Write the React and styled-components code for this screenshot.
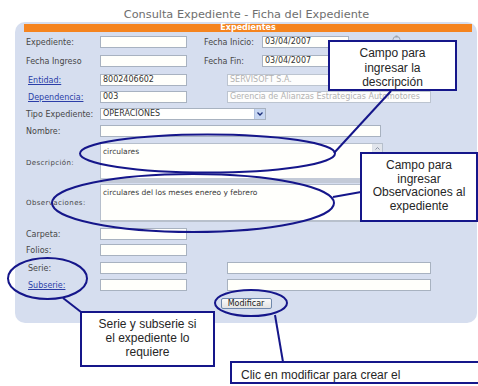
import React from 'react';
import styled, { createGlobalStyle } from 'styled-components';

const Global = createGlobalStyle`
  html, body { margin: 0; padding: 0; background: #fff; }
  body { font-family: "DejaVu Sans", Verdana, sans-serif; }
  #root { width: 478px; height: 386px; }
`;

const Page = styled.div`
  position: relative;
  width: 478px;
  height: 386px;
  overflow: hidden;
  background: #fff;
`;

const Title = styled.h1`
  margin: 8px 0 0 0;
  padding-left: 15px;
  height: 14px;
  text-align: center;
  font: normal 11.3px/14px "DejaVu Sans", Verdana, sans-serif;
  color: #6e6e6e;
`;

const Panel = styled.section`
  margin-left: 15px;
  width: 462px;
  background: #d6deef;
  border-radius: 10px;
  padding-top: 2px;
`;

const HeaderBar = styled.div`
  margin: 0 5px 0 9px;
  height: 8px;
  background: #f5841f;
  color: #fff;
  font: bold 8px/8px "DejaVu Sans", Verdana, sans-serif;
  text-align: center;
`;

const Body = styled.div`
  display: flex;
  flex-direction: column;
  padding: 0 0 14px 11px;
`;

const Row = styled.div`
  display: flex;
  align-items: center;
  height: ${p => p.$h || 12}px;
  margin-top: ${p => p.$mt || 0}px;
  justify-content: ${p => (p.$center ? 'center' : 'flex-start')};
  padding-right: ${p => (p.$center ? '11px' : '0')};
`;

const Label = styled.span`
  flex: none;
  width: ${p => p.$w || 74}px;
  font-size: ${p => (p.$small ? '7px' : '8px')};
  letter-spacing: ${p => (p.$small ? '0.4px' : '0')};
  color: ${p => (p.$link ? '#2c3ea8' : '#474747')};
  text-decoration: ${p => (p.$link ? 'underline' : 'none')};
  padding-left: ${p => (p.$link ? '2px' : '0')};
  box-sizing: border-box;
  white-space: nowrap;
`;

const Input = styled.div`
  flex: none;
  box-sizing: border-box;
  width: ${p => p.$w || 87}px;
  height: 12px;
  margin-left: ${p => p.$ml || 0}px;
  border: 1px solid ${p => (p.$disabled ? '#bcc4d0' : '#a8b2c0')};
  background: ${p => (p.$disabled ? '#fdfdfd' : '#fffffb')};
  color: ${p => (p.$disabled ? '#b2b2b2' : '#333')};
  font-size: 8px;
  line-height: 10px;
  padding: 0 2px;
  white-space: nowrap;
  overflow: hidden;
`;

const Select = styled.div`
  flex: none;
  box-sizing: border-box;
  width: 166px;
  height: 12px;
  border: 1px solid #a8b2c0;
  background: #fff;
  display: flex;
  align-items: stretch;
  font-size: 8px;
  line-height: 10px;
  color: #333;
`;

const SelectText = styled.span`
  flex: 1;
  padding-left: 2px;
`;

const SelectButton = styled.span`
  width: 10px;
  background: #c8d7f2;
  border-left: 1px solid #b4c4e2;
  display: flex;
  align-items: center;
  justify-content: center;
`;

const TextBox = styled.div`
  flex: none;
  box-sizing: border-box;
  width: 283px;
  height: ${p => p.$h}px;
  border: 1px solid #b6bfcc;
  border-bottom: ${p => (p.$band ? '5px solid #c3cad7' : '2px solid #b8c0cc')};
  background: #fffffc;
  display: flex;
  font-size: 7.5px;
  color: #3a3a3a;
`;

const TextContent = styled.div`
  flex: 1;
  padding: 3px 2px;
  line-height: 9px;
`;

const ScrollBar = styled.div`
  width: 9px;
  background: #eef0f4;
  border-left: 1px solid #dde1e8;
  display: flex;
  flex-direction: column;
`;

const ScrollArrow = styled.div`
  height: 8px;
  background: #e1e5ec;
  border-bottom: 1px solid #cfd4dc;
  display: flex;
  align-items: center;
  justify-content: center;
`;

const Button = styled.div`
  box-sizing: border-box;
  width: 51px;
  height: 11px;
  border: 1px solid #6f88ac;
  border-radius: 2px;
  background: linear-gradient(#fbfbfb, #e2e2e2);
  color: #222;
  font-size: 8px;
  line-height: 9px;
  text-align: center;
`;

const Overlay = styled.svg`
  position: absolute;
  left: 0;
  top: 0;
  pointer-events: none;
`;

const Callout = styled.div`
  position: absolute;
  left: ${p => p.$x}px;
  top: ${p => p.$y}px;
  width: ${p => p.$w}px;
  height: ${p => p.$h}px;
  box-sizing: border-box;
  border: 2px solid #15168a;
  background: #fff;
  font: 12px/${p => p.$lh || 14}px "Liberation Sans", Arial, sans-serif;
  color: #262626;
  text-align: ${p => (p.$left ? 'left' : 'center')};
  padding: ${p => p.$pad || '4px 3px'};
`;

const CalIcon = styled.svg`
  flex: none;
  margin-left: 43px;
  margin-top: -6px;
`;

export default function App() {
  return (
    <Page>
      <Global />
      <Title>Consulta Expediente - Ficha del Expediente</Title>
      <Panel>
        <HeaderBar>Expedientes</HeaderBar>
        <Body>
          <Row $mt={4}>
            <Label>Expediente:</Label>
            <Input />
            <Label $w={58} style={{ marginLeft: 17 }}>Fecha Inicio:</Label>
            <Input>03/04/2007</Input>
            <CalIcon width="9" height="8" viewBox="0 0 9 8">
              <ellipse cx="4.5" cy="4.5" rx="3.5" ry="3" fill="none" stroke="#9aa2ad" strokeWidth="1" />
              <rect x="3.5" y="0.5" width="2" height="2" fill="#9aa2ad" />
            </CalIcon>
          </Row>
          <Row $mt={7}>
            <Label>Fecha Ingreso</Label>
            <Input />
            <Label $w={58} style={{ marginLeft: 17 }}>Fecha Fin:</Label>
            <Input>03/04/2007</Input>
          </Row>
          <Row $mt={7}>
            <Label $link>Entidad:</Label>
            <Input>8002406602</Input>
            <Input $disabled $ml={40} $w={122}>SERVISOFT S.A.</Input>
          </Row>
          <Row $mt={5}>
            <Label $link>Dependencia:</Label>
            <Input>003</Input>
            <Input $disabled $ml={40} $w={204}>Gerencia de Alianzas Estrategicas Automotores</Input>
          </Row>
          <Row $mt={5}>
            <Label>Tipo Expediente:</Label>
            <Select>
              <SelectText>OPERACIONES</SelectText>
              <SelectButton>
                <svg width="6" height="4" viewBox="0 0 6 4">
                  <path d="M0.5 0.5 L3 3 L5.5 0.5" fill="none" stroke="#1d2f7a" strokeWidth="1.3" />
                </svg>
              </SelectButton>
            </Select>
          </Row>
          <Row $mt={5}>
            <Label>Nombre:</Label>
            <Input $w={281} />
          </Row>
          <Row $mt={6} $h={40}>
            <Label $small>Descripción:</Label>
            <TextBox $h={40} $band>
              <TextContent>circulares</TextContent>
              <ScrollBar>
                <ScrollArrow>
                  <svg width="5" height="3" viewBox="0 0 5 3">
                    <path d="M0.5 2.5 L2.5 0.5 L4.5 2.5" fill="none" stroke="#8a93a3" strokeWidth="1" />
                  </svg>
                </ScrollArrow>
              </ScrollBar>
            </TextBox>
          </Row>
          <Row $mt={1} $h={38}>
            <Label $small>Observaciones:</Label>
            <TextBox $h={38}>
              <TextContent>circulares del los meses enereo y febrero</TextContent>
            </TextBox>
          </Row>
          <Row $mt={6}>
            <Label>Carpeta:</Label>
            <Input />
          </Row>
          <Row $mt={4}>
            <Label>Folios:</Label>
            <Input />
          </Row>
          <Row $mt={6}>
            <Label style={{ paddingLeft: 2 }}>Serie:</Label>
            <Input />
            <Input $ml={40} $w={204} />
          </Row>
          <Row $mt={5}>
            <Label $link>Subserie:</Label>
            <Input />
            <Input $ml={40} $w={204} />
          </Row>
          <Row $mt={7} $h={11} $center>
            <Button>Modificar</Button>
          </Row>
        </Body>
      </Panel>

      <Overlay width="478" height="386" viewBox="0 0 478 386">
        <g fill="none" stroke="#15168a" strokeWidth="2">
          <ellipse cx="207.5" cy="153.5" rx="127.5" ry="19" />
          <ellipse cx="193" cy="203" rx="141" ry="29" />
          <ellipse cx="47.5" cy="278.5" rx="39.5" ry="20.5" />
          <ellipse cx="251" cy="303" rx="36" ry="13" />
          <line x1="391" y1="91" x2="334" y2="153" />
          <line x1="333" y1="197" x2="361" y2="192" />
          <line x1="63" y1="298" x2="81" y2="312" />
          <line x1="275" y1="315" x2="283" y2="362" />
        </g>
      </Overlay>

      <Callout $x={328} $y={40} $w={129} $h={51} $lh={14.5}>
        Campo para<br />ingresar la<br />descripción
      </Callout>
      <Callout $x={360} $y={152} $w={118} $h={70} $lh={13.7} $pad="5px 2px">
        Campo para<br />ingresar<br />Observaciones al<br />expediente
      </Callout>
      <Callout $x={80} $y={311} $w={135} $h={56} $pad="4px 3px">
        Serie y subserie si<br />el expediente lo<br />requiere
      </Callout>
      <Callout $x={230} $y={361} $w={280} $h={23} $left $pad="5px 9px">
        Clic en modificar para crear el
      </Callout>
    </Page>
  );
}
